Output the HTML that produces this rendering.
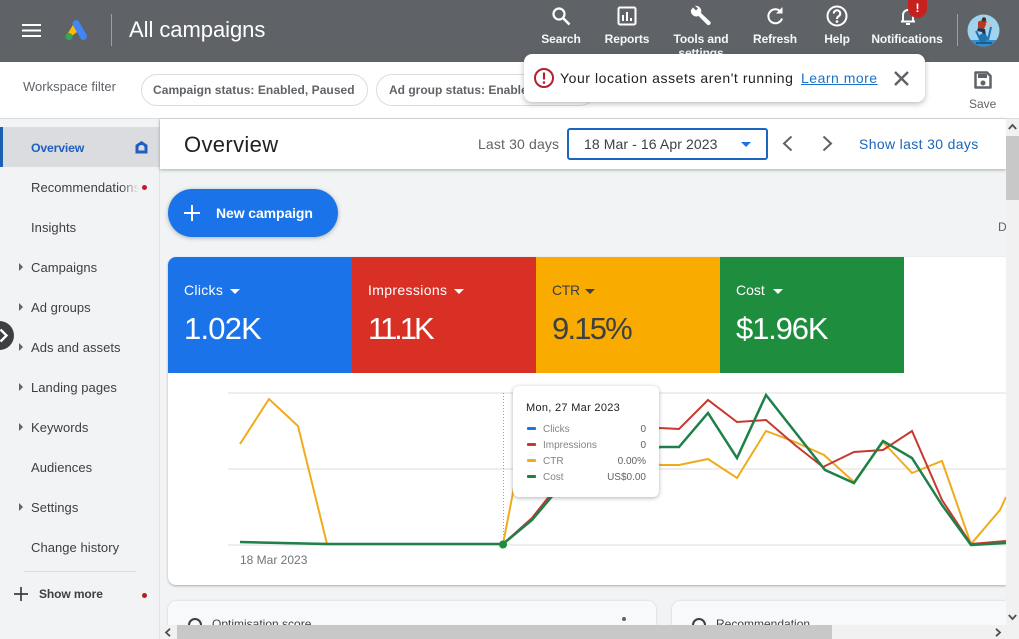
<!DOCTYPE html>
<html lang="en">
<head>
<meta charset="utf-8">
<title>All campaigns</title>
<style>
*{box-sizing:border-box}
html,body{margin:0;padding:0;width:1019px;height:639px;overflow:hidden;background:#f1f3f4;font-family:"Liberation Sans",sans-serif;color:#3c4043}
.a{position:absolute;white-space:nowrap}
.hl{color:#fff;font-size:12px;font-weight:700;text-align:center;line-height:14px;letter-spacing:-.1px;transform:translateX(-50%);opacity:.95}
.nav{left:31px;font-size:13px;line-height:16px;color:#3c4043;letter-spacing:.05px}
.tri{width:0;height:0;border-left:4px solid #5f6368;border-top:4px solid transparent;border-bottom:4px solid transparent;left:19px}
.mt{font-size:14px;line-height:16px;color:#fff}
.mv{font-size:31px;line-height:36px;color:#fff;letter-spacing:-.8px}
.car{width:0;height:0;border-left:5px solid transparent;border-right:5px solid transparent;border-top:5px solid #fff}
.tt{font-size:10px;line-height:12px;color:#80868b}
.tv{font-size:10px;line-height:12px;color:#5f6368;text-align:right;right:13px}
.sw{left:14px;width:9px;height:3px;border-radius:1px}
</style>
</head>
<body>
<!-- main background -->
<div class="a" style="left:160px;top:119px;width:846px;height:520px;background:#f1f3f4"></div>

<!-- sidebar -->
<div class="a" style="left:0;top:119px;width:160px;height:520px;background:#f1f3f4;border-right:1px solid #e0e2e4"></div>
<div class="a" style="left:0;top:127px;width:160px;height:40px;background:#dadce0"></div>
<div class="a" style="left:0;top:127px;width:3px;height:40px;background:#1a5fb4"></div>
<div class="a nav" style="top:140px;color:#1f5fbf;font-weight:700;font-size:12.3px;letter-spacing:-.2px">Overview</div>
<svg class="a" style="left:134px;top:140px" width="15" height="14" viewBox="0 0 15 14"><path d="M1.500 13.500V5L7.500 1l6 4v8.500Z" fill="#1f5fbf"/><path d="M4.500 13V7.500a3 2.500 0 0 1 6 0V13Z" fill="#dadce0"/><rect x="4.500" y="10.500" width="6" height="3" fill="#1f5fbf"/></svg>
<div class="a nav" style="top:180px;width:108px;overflow:hidden;-webkit-mask-image:linear-gradient(90deg,#000 90px,transparent 108px);mask-image:linear-gradient(90deg,#000 90px,transparent 108px)">Recommendations</div>
<div class="a" style="left:142px;top:185px;width:5px;height:5px;border-radius:50%;background:#c5192d"></div>
<div class="a nav" style="top:220px">Insights</div>
<div class="a tri" style="top:263px"></div><div class="a nav" style="top:260px">Campaigns</div>
<div class="a tri" style="top:303px"></div><div class="a nav" style="top:300px">Ad groups</div>
<div class="a tri" style="top:343px"></div><div class="a nav" style="top:340px">Ads and assets</div>
<div class="a tri" style="top:383px"></div><div class="a nav" style="top:380px">Landing pages</div>
<div class="a tri" style="top:423px"></div><div class="a nav" style="top:420px">Keywords</div>
<div class="a nav" style="top:460px">Audiences</div>
<div class="a tri" style="top:503px"></div><div class="a nav" style="top:500px">Settings</div>
<div class="a nav" style="top:540px">Change history</div>
<div class="a" style="left:24px;top:571px;width:112px;height:1px;background:#dadce0"></div>
<svg class="a" style="left:14px;top:587px" width="14" height="14" viewBox="0 0 14 14"><path d="M7 0v14M0 7h14" stroke="#3c4043" stroke-width="1.700"/></svg>
<div class="a" style="left:39px;top:587px;font-size:12px;line-height:15px;font-weight:700;color:#3c4043;letter-spacing:-.1px">Show more</div>
<div class="a" style="left:142px;top:593px;width:5px;height:5px;border-radius:50%;background:#b71c1c"></div>
<!-- collapse handle -->
<div class="a" style="left:-15px;top:321px;width:29px;height:29px;border-radius:50%;background:#3c4043"></div>
<svg class="a" style="left:0;top:328px" width="10" height="15" viewBox="0 0 10 15"><path d="M.5 1.500 6.500 7.500.5 13.500" fill="none" stroke="#fff" stroke-width="2.400"/></svg>

<!-- top white filter row -->
<div class="a" style="left:0;top:62px;width:1019px;height:57px;background:#fff;border-bottom:1px solid #dadce0"></div>
<div class="a" style="left:23px;top:79px;font-size:13px;line-height:15px;color:#5f6368">Workspace filter</div>
<div class="a" style="left:141px;top:74px;width:227px;height:32px;border:1px solid #dadce0;border-radius:16px"></div>
<div class="a" style="left:153px;top:83px;font-size:12px;line-height:15px;font-weight:700;color:#5f6368;letter-spacing:.05px">Campaign status: Enabled, Paused</div>
<div class="a" style="left:376px;top:74px;width:220px;height:32px;border:1px solid #dadce0;border-radius:16px"></div>
<div class="a" style="left:389px;top:83px;font-size:12px;line-height:15px;font-weight:700;color:#5f6368">Ad group status: Enabled</div>
<svg class="a" style="left:973px;top:70px" width="20" height="20" viewBox="0 0 20 20"><path d="M2.500 2.500h11.500L17.500 6V17.500H2.500Z" fill="none" stroke="#5f6368" stroke-width="2.500" stroke-linejoin="round"/><rect x="5" y="4" width="9" height="4" fill="#5f6368"/><circle cx="10" cy="13" r="2.500" fill="#5f6368"/></svg>
<div class="a" style="left:969px;top:97px;font-size:12px;line-height:15px;color:#5f6368">Save</div>

<!-- header -->
<div class="a" style="left:0;top:0;width:1019px;height:62px;background:#5f6368"></div>
<svg class="a" style="left:22px;top:24px" width="19" height="13" viewBox="0 0 19 13"><path d="M0 1h19M0 6.500h19M0 12h19" stroke="#fff" stroke-width="2"/></svg>
<svg class="a" style="left:64px;top:18px" width="24" height="24" viewBox="0 0 24 24"><path d="M9.500 6 13 14 7 18.500H2Z" fill="#fbbc04"/><path d="M12 5.500 19.500 18.500" stroke="#4285f4" stroke-width="7" stroke-linecap="round"/><circle cx="5" cy="18.500" r="3.500" fill="#34a853"/></svg>
<div class="a" style="left:111px;top:14px;width:1px;height:32px;background:#9aa0a6"></div>
<div class="a" style="left:129px;top:16px;font-size:22px;line-height:28px;color:#fff;letter-spacing:-.05px">All campaigns</div>

<svg class="a" style="left:551px;top:6px" width="20" height="20" viewBox="0 0 20 20"><circle cx="8" cy="8" r="5.500" fill="none" stroke="#fff" stroke-width="2.200"/><path d="m12 12 6.500 6.500" stroke="#fff" stroke-width="2.600"/></svg>
<div class="a hl" style="left:561px;top:32px">Search</div>
<svg class="a" style="left:617px;top:6px" width="20" height="20" viewBox="0 0 20 20"><rect x="1.500" y="1.500" width="17" height="17" rx="1.500" fill="none" stroke="#fff" stroke-width="2"/><path d="M6 9v6M10 6v9M14 12v3" stroke="#fff" stroke-width="2"/></svg>
<div class="a hl" style="left:627px;top:32px">Reports</div>
<svg class="a" style="left:690px;top:5px" width="22" height="22" viewBox="0 0 22 22"><path d="M3 2.500 6 5.500 8 3.500 5 .8A5.500 5.500 0 0 1 11 8l9 8.500a2 2 0 0 1-3 3L8.500 11A5.500 5.500 0 0 1 1 5Z" fill="#fff"/></svg>
<div class="a hl" style="left:701px;top:32px">Tools and</div>
<div class="a hl" style="left:701px;top:46px">settings</div>
<svg class="a" style="left:765px;top:6px" width="20" height="20" viewBox="0 0 20 20"><path d="M15.500 5.500A7 7 0 1 0 17 12.500" fill="none" stroke="#fff" stroke-width="2"/><path d="M11 7.500h6.500V1Z" fill="#fff"/></svg>
<div class="a hl" style="left:775px;top:32px">Refresh</div>
<svg class="a" style="left:826px;top:5px" width="22" height="22" viewBox="0 0 22 22"><circle cx="11" cy="11" r="9.500" fill="none" stroke="#fff" stroke-width="2"/><path d="M7.800 8.500a3.200 3.200 0 1 1 5 2.600c-1.200.8-1.800 1.300-1.800 2.900" fill="none" stroke="#fff" stroke-width="2"/><circle cx="11" cy="16.500" r="1.300" fill="#fff"/></svg>
<div class="a hl" style="left:837px;top:32px">Help</div>
<svg class="a" style="left:898px;top:6px" width="20" height="20" viewBox="0 0 20 20"><path d="M3 15.500h14M5 15V9a5 5 0 0 1 10 0v6" fill="none" stroke="#fff" stroke-width="2"/><rect x="8" y="17" width="4" height="2" fill="#fff"/></svg>
<div class="a" style="left:908px;top:0;width:19px;height:18px;border-radius:0 0 10px 10px;background:#c5221f;color:#fff;font-size:12px;font-weight:700;text-align:center;line-height:17px">!</div>
<div class="a hl" style="left:907px;top:32px">Notifications</div>
<div class="a" style="left:957px;top:14px;width:1px;height:32px;background:#9aa0a6"></div>
<svg class="a" style="left:967px;top:14px" width="33" height="33" viewBox="0 0 33 33"><defs><clipPath id="c"><circle cx="16.500" cy="16.500" r="16"/></clipPath></defs><g clip-path="url(#c)"><rect width="33" height="33" fill="#9fd3ee"/><rect y="26" width="33" height="7" fill="#2f8fd0"/><path d="M11 8c4-3 8-2 9 0l-3 7-6-1Z" fill="#b23a26"/><circle cx="17" cy="5.500" r="2.200" fill="#4a2d20"/><path d="M11 14l7 1 1 7-2 1-2-5-5-1Z" fill="#24324a"/><path d="M19 9l6 3" stroke="#e5b89b" stroke-width="1.600"/><path d="M9 17l5 10M24 13l-3 13" stroke="#2274b0" stroke-width="2"/><circle cx="16" cy="24" r="4.500" fill="#2274b0"/><rect x="9" y="28" width="16" height="2" fill="#1c5d90"/></g></svg>

<!-- toast -->
<div class="a" style="left:524px;top:54px;width:401px;height:48px;background:#fff;border-radius:8px;box-shadow:0 2px 6px rgba(60,64,67,.35)"></div>
<svg class="a" style="left:533px;top:67px" width="22" height="22" viewBox="0 0 22 22"><circle cx="11" cy="11" r="9" fill="none" stroke="#b3202c" stroke-width="2"/><path d="M11 5.500v7" stroke="#b3202c" stroke-width="2.200"/><circle cx="11" cy="15.500" r="1.300" fill="#b3202c"/></svg>
<div class="a" style="left:560px;top:70px;font-size:14px;line-height:17px;color:#202124;letter-spacing:.56px">Your location assets aren't running</div>
<div class="a" style="left:801px;top:70px;font-size:14px;line-height:17px;color:#1a73c8;text-decoration:underline;letter-spacing:.5px">Learn more</div>
<svg class="a" style="left:894px;top:71px" width="15" height="15" viewBox="0 0 15 15"><path d="m1 1 13 13M14 1 1 14" stroke="#5f6368" stroke-width="2.400"/></svg>

<!-- page title bar -->
<div class="a" style="left:160px;top:119px;width:846px;height:50px;background:#fff;box-shadow:0 1px 3px rgba(60,64,67,.4)"></div>
<div class="a" style="left:184px;top:131px;font-size:22px;line-height:27px;color:#202124;letter-spacing:.35px">Overview</div>
<div class="a" style="left:478px;top:136px;font-size:14px;line-height:16px;color:#5f6368;letter-spacing:.15px">Last 30 days</div>
<div class="a" style="left:567px;top:128px;width:201px;height:32px;border:2px solid #1a66c0;border-radius:3px;background:#fff"></div>
<div class="a" style="left:584px;top:136px;font-size:14px;line-height:16px;color:#3c4043;letter-spacing:.1px">18 Mar - 16 Apr 2023</div>
<div class="a car" style="left:741px;top:142px;border-top-color:#1a73e8"></div>
<svg class="a" style="left:781px;top:135px" width="13" height="17" viewBox="0 0 13 17"><path d="M10.500 1.500 3 8.500l7.500 7" fill="none" stroke="#5f6368" stroke-width="2"/></svg>
<svg class="a" style="left:821px;top:135px" width="13" height="17" viewBox="0 0 13 17"><path d="M2.500 1.500 10 8.500l-7.500 7" fill="none" stroke="#5f6368" stroke-width="2"/></svg>
<div class="a" style="left:859px;top:136px;font-size:14px;line-height:16px;color:#1a66b8;letter-spacing:.35px">Show last 30 days</div>

<!-- new campaign -->
<div class="a" style="left:168px;top:189px;width:170px;height:48px;border-radius:24px;background:#1a73e8;box-shadow:0 1px 4px rgba(60,64,67,.4)"></div>
<svg class="a" style="left:183px;top:204px" width="18" height="18" viewBox="0 0 18 18"><path d="M9 1v16M1 9h16" stroke="#fff" stroke-width="2"/></svg>
<div class="a" style="left:216px;top:205px;font-size:14px;line-height:16px;font-weight:700;color:#fff;letter-spacing:-.1px">New campaign</div>
<div class="a" style="left:998px;top:220px;font-size:12px;line-height:14px;color:#5f6368">D</div>

<!-- main card -->
<div class="a" style="left:168px;top:257px;width:838px;height:328px;background:#fff;border-radius:8px 0 0 8px;box-shadow:0 1px 2px rgba(60,64,67,.4)"></div>
<div class="a" style="left:168px;top:257px;width:184px;height:116px;background:#1a73e8;border-top-left-radius:8px"></div>
<div class="a" style="left:352px;top:257px;width:184px;height:116px;background:#d93025"></div>
<div class="a" style="left:536px;top:257px;width:184px;height:116px;background:#f9ab00"></div>
<div class="a" style="left:720px;top:257px;width:184px;height:116px;background:#1e8e3e"></div>
<div class="a mt" style="left:184px;top:282px;letter-spacing:.3px">Clicks</div><div class="a car" style="left:230px;top:289px"></div>
<div class="a mv" style="left:184px;top:311px">1.02K</div>
<div class="a mt" style="left:368px;top:282px;letter-spacing:.35px">Impressions</div><div class="a car" style="left:454px;top:289px"></div>
<div class="a mv" style="left:368px;top:311px;letter-spacing:-3px">11.1K</div>
<div class="a mt" style="left:552px;top:282px;color:#3c4043;letter-spacing:-.3px">CTR</div><div class="a car" style="left:585px;top:289px;border-top-color:#3c4043"></div>
<div class="a mv" style="left:552px;top:311px;color:#3c4043;letter-spacing:-1.800px">9.15%</div>
<div class="a mt" style="left:736px;top:282px">Cost</div><div class="a car" style="left:773px;top:289px"></div>
<div class="a mv" style="left:736px;top:311px;letter-spacing:-1.150px">$1.96K</div>

<!-- chart -->
<svg class="a" style="left:0;top:0" width="1006" height="639" viewBox="0 0 1006 639">
<path d="M228 393H1006M228 469H1006M228 545H1006" stroke="#e8e8e8" stroke-width="1.500" fill="none"/>
<path d="M503.500 393V545" stroke="#9aa0a6" stroke-width="1" stroke-dasharray="1 2" fill="none"/>
<polyline fill="none" stroke="#f0ab1c" stroke-width="2" points="240,444 269,399 298,426 327,544 503,544 532,395 660,465 679,465 708,459 737,478 766,431 795,442 824,455 854,482 883,442 912,473 942,461 971,544 1000,510 1006,497"/>
<polyline fill="none" stroke="#c5392e" stroke-width="2" points="240,542 327,544 503,544 532,518 570,470 660,428 679,429 708,400 737,422 766,420 795,445 823,467 854,452 883,450 912,431 942,500 971,544 1006,541"/>
<polyline fill="none" stroke="#1f8049" stroke-width="2.500" points="240,542 327,544 503,544 532,520 570,475 660,447 679,447 708,413 737,458 766,395 825,470 854,483 883,441 912,458 942,505 971,545 1006,543"/>
<circle cx="503" cy="544.500" r="4" fill="#1e8e3e"/>
</svg>
<div class="a" style="left:240px;top:553px;font-size:12px;line-height:15px;color:#70757a">18 Mar 2023</div>

<!-- tooltip -->
<div class="a" style="left:513px;top:386px;width:146px;height:111px;background:#fff;border-radius:6px;box-shadow:0 1px 4px rgba(60,64,67,.4)">
<div class="a" style="left:13px;top:15px;font-size:11px;line-height:14px;color:#202124;letter-spacing:.3px">Mon, 27 Mar 2023</div>
<div class="a sw" style="top:41px;background:#1a73e8"></div><div class="a tt" style="left:30px;top:37px;top:38px">Clicks</div><div class="a tv" style="top:38px">0</div>
<div class="a sw" style="top:57px;background:#c5392e"></div><div class="a tt" style="left:30px;top:54px">Impressions</div><div class="a tv" style="top:54px">0</div>
<div class="a sw" style="top:73px;background:#f0ab1c"></div><div class="a tt" style="left:30px;top:70px">CTR</div><div class="a tv" style="top:70px">0.00%</div>
<div class="a sw" style="top:89px;background:#1f8049"></div><div class="a tt" style="left:30px;top:86px">Cost</div><div class="a tv" style="top:86px">US$0.00</div>
</div>

<!-- lower cards -->
<div class="a" style="left:168px;top:601px;width:488px;height:38px;background:#f8f9fa;border-radius:8px 8px 0 0;box-shadow:0 0 2px rgba(60,64,67,.2)"></div>
<div class="a" style="left:672px;top:601px;width:334px;height:38px;background:#f8f9fa;border-radius:8px 0 0 0;box-shadow:0 0 2px rgba(60,64,67,.2)"></div>
<svg class="a" style="left:187px;top:617px" width="16" height="14" viewBox="0 0 16 14"><circle cx="8" cy="8" r="6" fill="none" stroke="#3c4043" stroke-width="2"/></svg>
<div class="a" style="left:212px;top:617px;font-size:12px;line-height:15px;color:#3c4043">Optimisation score</div>
<div class="a" style="left:622px;top:617px;width:4px;height:4px;border-radius:50%;background:#5f6368"></div>
<svg class="a" style="left:691px;top:617px" width="16" height="14" viewBox="0 0 16 14"><circle cx="8" cy="8" r="6" fill="none" stroke="#3c4043" stroke-width="2"/></svg>
<div class="a" style="left:716px;top:617px;font-size:12px;line-height:15px;color:#3c4043">Recommendation</div>

<!-- scrollbars -->
<div class="a" style="left:160px;top:625px;width:846px;height:14px;background:#f1f1f1"></div>
<div class="a" style="left:177px;top:625px;width:655px;height:14px;background:#c8c8c8"></div>
<svg class="a" style="left:164px;top:628px" width="8" height="9" viewBox="0 0 8 9"><path d="M6 .8 2 4.500l4 3.700" fill="none" stroke="#505050" stroke-width="1.800"/></svg>
<svg class="a" style="left:994px;top:628px" width="8" height="9" viewBox="0 0 8 9"><path d="M2 .8 6 4.500 2 8.200" fill="none" stroke="#505050" stroke-width="1.800"/></svg>
<div class="a" style="left:1006px;top:119px;width:13px;height:520px;background:#f1f1f1"></div>
<div class="a" style="left:1006px;top:136px;width:13px;height:64px;background:#c8c8c8"></div>
<svg class="a" style="left:1008px;top:123px" width="9" height="8" viewBox="0 0 9 8"><path d="M.8 6 4.500 2l3.700 4" fill="none" stroke="#505050" stroke-width="1.800"/></svg>
<svg class="a" style="left:1008px;top:613px" width="9" height="8" viewBox="0 0 9 8"><path d="M.8 2 4.500 6l3.700-4" fill="none" stroke="#505050" stroke-width="1.800"/></svg>
</body>
</html>
